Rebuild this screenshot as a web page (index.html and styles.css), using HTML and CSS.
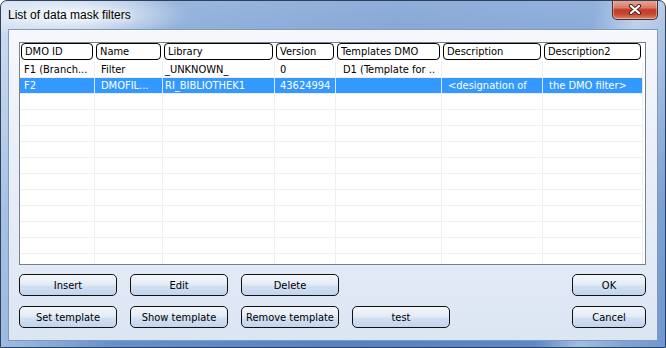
FILE: index.html
```html
<!DOCTYPE html>
<html lang="en">
<head>
  <meta charset="UTF-8">
  <title>List of data mask filters</title>
  <link rel="stylesheet" href="styles.css">
</head>
<body>
  <div class="window">
    <!-- Title bar -->
    <div class="titlebar">
      <span class="title">List of data mask filters</span>
      <div class="close-btn">
        <svg width="14" height="11" viewBox="0 0 14 11">
          <path d="M3 2 L11 9 M11 2 L3 9" stroke="#4a2620" stroke-width="4.2" stroke-linecap="round"/>
          <path d="M3 2 L11 9 M11 2 L3 9" stroke="#ffffff" stroke-width="2.2" stroke-linecap="round"/>
        </svg>
      </div>
    </div>

    <div class="frame">
      <div class="client">
        <!-- Filter list -->
        <div class="list">
          <div class="list-head">
            <div class="col c1"><div class="head-cell">DMO ID</div></div>
            <div class="col c2"><div class="head-cell">Name</div></div>
            <div class="col c3"><div class="head-cell">Library</div></div>
            <div class="col c4"><div class="head-cell">Version</div></div>
            <div class="col c5"><div class="head-cell">Templates DMO</div></div>
            <div class="col c6"><div class="head-cell">Description</div></div>
            <div class="col c7"><div class="head-cell">Description2</div></div>
          </div>
          <div class="list-body" id="listBody">
            <div class="row">
              <div class="cell c1">F1 (Branch...</div>
              <div class="cell c2">Filter</div>
              <div class="cell c3">_UNKNOWN_</div>
              <div class="cell c4">0</div>
              <div class="cell c5">D1 (Template for ..</div>
              <div class="cell c6"></div>
              <div class="cell c7"></div>
            </div>
            <div class="row selected">
              <div class="cell c1">F2</div>
              <div class="cell c2">DMOFIL...</div>
              <div class="cell c3">RI_BIBLIOTHEK1</div>
              <div class="cell c4">43624994</div>
              <div class="cell c5"></div>
              <div class="cell c6">&lt;designation of</div>
              <div class="cell c7">the DMO filter&gt;</div>
            </div>
          </div>
        </div>

        <!-- Buttons -->
        <div class="button-row">
          <button class="btn">Insert</button>
          <button class="btn">Edit</button>
          <button class="btn">Delete</button>
          <button class="btn btn-small push-right">OK</button>
        </div>
        <div class="button-row">
          <button class="btn">Set template</button>
          <button class="btn">Show template</button>
          <button class="btn">Remove template</button>
          <button class="btn">test</button>
          <button class="btn btn-small push-right">Cancel</button>
        </div>
      </div>
    </div>
  </div>

  <script>
    // fill the rest of the list with empty grid rows
    const listBody = document.getElementById('listBody');
    for (let i = 0; i < 11; i++) {
      const row = document.createElement('div');
      row.className = 'row';
      for (let c = 1; c <= 7; c++) {
        const cell = document.createElement('div');
        cell.className = 'cell c' + c;
        row.appendChild(cell);
      }
      listBody.appendChild(row);
    }
  </script>
</body>
</html>
```

FILE: styles.css
```css
* {
  margin: 0;
  padding: 0;
  box-sizing: border-box;
}

body {
  width: 666px;
  height: 348px;
  overflow: hidden;
  background: #ffffff;
  font-family: "DejaVu Sans Condensed", "DejaVu Sans", sans-serif;
  font-size: 11px;
  color: #000000;
}

/* Window frame */
.window {
  width: 666px;
  height: 348px;
  border: 1px solid #2f415a;
  border-radius: 7px 7px 0 0;
  display: flex;
  flex-direction: column;
  overflow: hidden;
  background:
    radial-gradient(ellipse 120px 24px at 70px 14px, rgba(255, 255, 255, 0.85) 0%, rgba(255, 255, 255, 0) 100%),
    linear-gradient(to bottom, rgba(255, 255, 255, 0.35) 0%, rgba(255, 255, 255, 0) 60%),
    linear-gradient(100deg, #b7cdea 0%, #94b3df 12%, #6490cc 24%, #5582c4 55%, #5a88c9 82%, #a2bde2 88%, #82a5d7 94%, #6f97cf 100%);
}

.titlebar {
  height: 28px;
  display: flex;
  justify-content: space-between;
  align-items: flex-start;
}

.title {
  font-family: "Liberation Sans", sans-serif;
  font-size: 12px;
  color: #000000;
  padding: 7px 0 0 7px;
  text-shadow:
    0 0 6px rgba(255, 255, 255, 0.9),
    0 0 10px rgba(255, 255, 255, 0.8);
}

.close-btn {
  width: 46px;
  height: 20px;
  margin: -1px 7px 0 0;
  border: 1px solid #4a2f2f;
  border-top: none;
  border-radius: 0 0 5px 5px;
  background: linear-gradient(#e9ab9b 0%, #dc7a66 40%, #c23c28 52%, #c8482f 75%, #d9856d 100%);
  box-shadow: inset 0 0 0 1px rgba(255, 255, 255, 0.35);
  display: flex;
  justify-content: center;
  align-items: center;
}

.frame {
  flex: 1;
  display: flex;
  padding: 0 7px 6px 7px;
}

.client {
  flex: 1;
  border: 1px solid #8199ba;
  padding: 12px 11px 0 10px;
  background: linear-gradient(#f6f8fc 0%, #e9eff8 40%, #dce6f3 100%);
}

/* List view */
.list {
  height: 223px;
  border: 1px solid #7a7f88;
  background: #ffffff;
  overflow: hidden;
}

.list-head {
  display: flex;
  height: 19px;
}

.col {
  padding: 0 2px 0 1px;
}

.head-cell {
  height: 17px;
  border: 1px solid #000000;
  border-radius: 4px;
  background: #ffffff;
  padding-left: 3px;
  line-height: 15px;
  white-space: nowrap;
  overflow: hidden;
}

.row {
  display: flex;
  height: 16px;
}

.cell {
  height: 16px;
  border-right: 1px solid #efefef;
  border-bottom: 1px solid #efefef;
  line-height: 15px;
  white-space: nowrap;
  overflow: hidden;
  padding-left: 5px;
}

.row.selected .cell {
  background: #3399ff;
  color: #ffffff;
  border-right-color: #d8e9fb;
}

.c1 { width: 75px; }
.c2 { width: 68px; }
.c3 { width: 112px; }
.c4 { width: 61px; }
.c5 { width: 106px; }
.c6 { width: 101px; }
.c7 { width: 100px; }

.cell.c1 { padding-left: 4px; }
.cell.c2 { padding-left: 6px; }
.cell.c3 { padding-left: 2px; }
.cell.c5 { padding-left: 7px; }
.cell.c6 { padding-left: 6px; }
.cell.c7 { padding-left: 6px; }

/* Buttons */
.button-row {
  display: flex;
  gap: 13px;
  margin-top: 9px;
}

.button-row + .button-row {
  margin-top: 10px;
}

.btn {
  width: 98px;
  height: 22px;
  border: 1px solid #111111;
  border-radius: 5px;
  background: linear-gradient(#f4f7fb 0%, #e4ecf7 45%, #cfdef2 60%, #c2d5ee 100%);
  font-family: "DejaVu Sans Condensed", "DejaVu Sans", sans-serif;
  font-size: 11px;
  color: #000000;
}

.btn-small {
  width: 74px;
}

.push-right {
  margin-left: auto;
}
```
